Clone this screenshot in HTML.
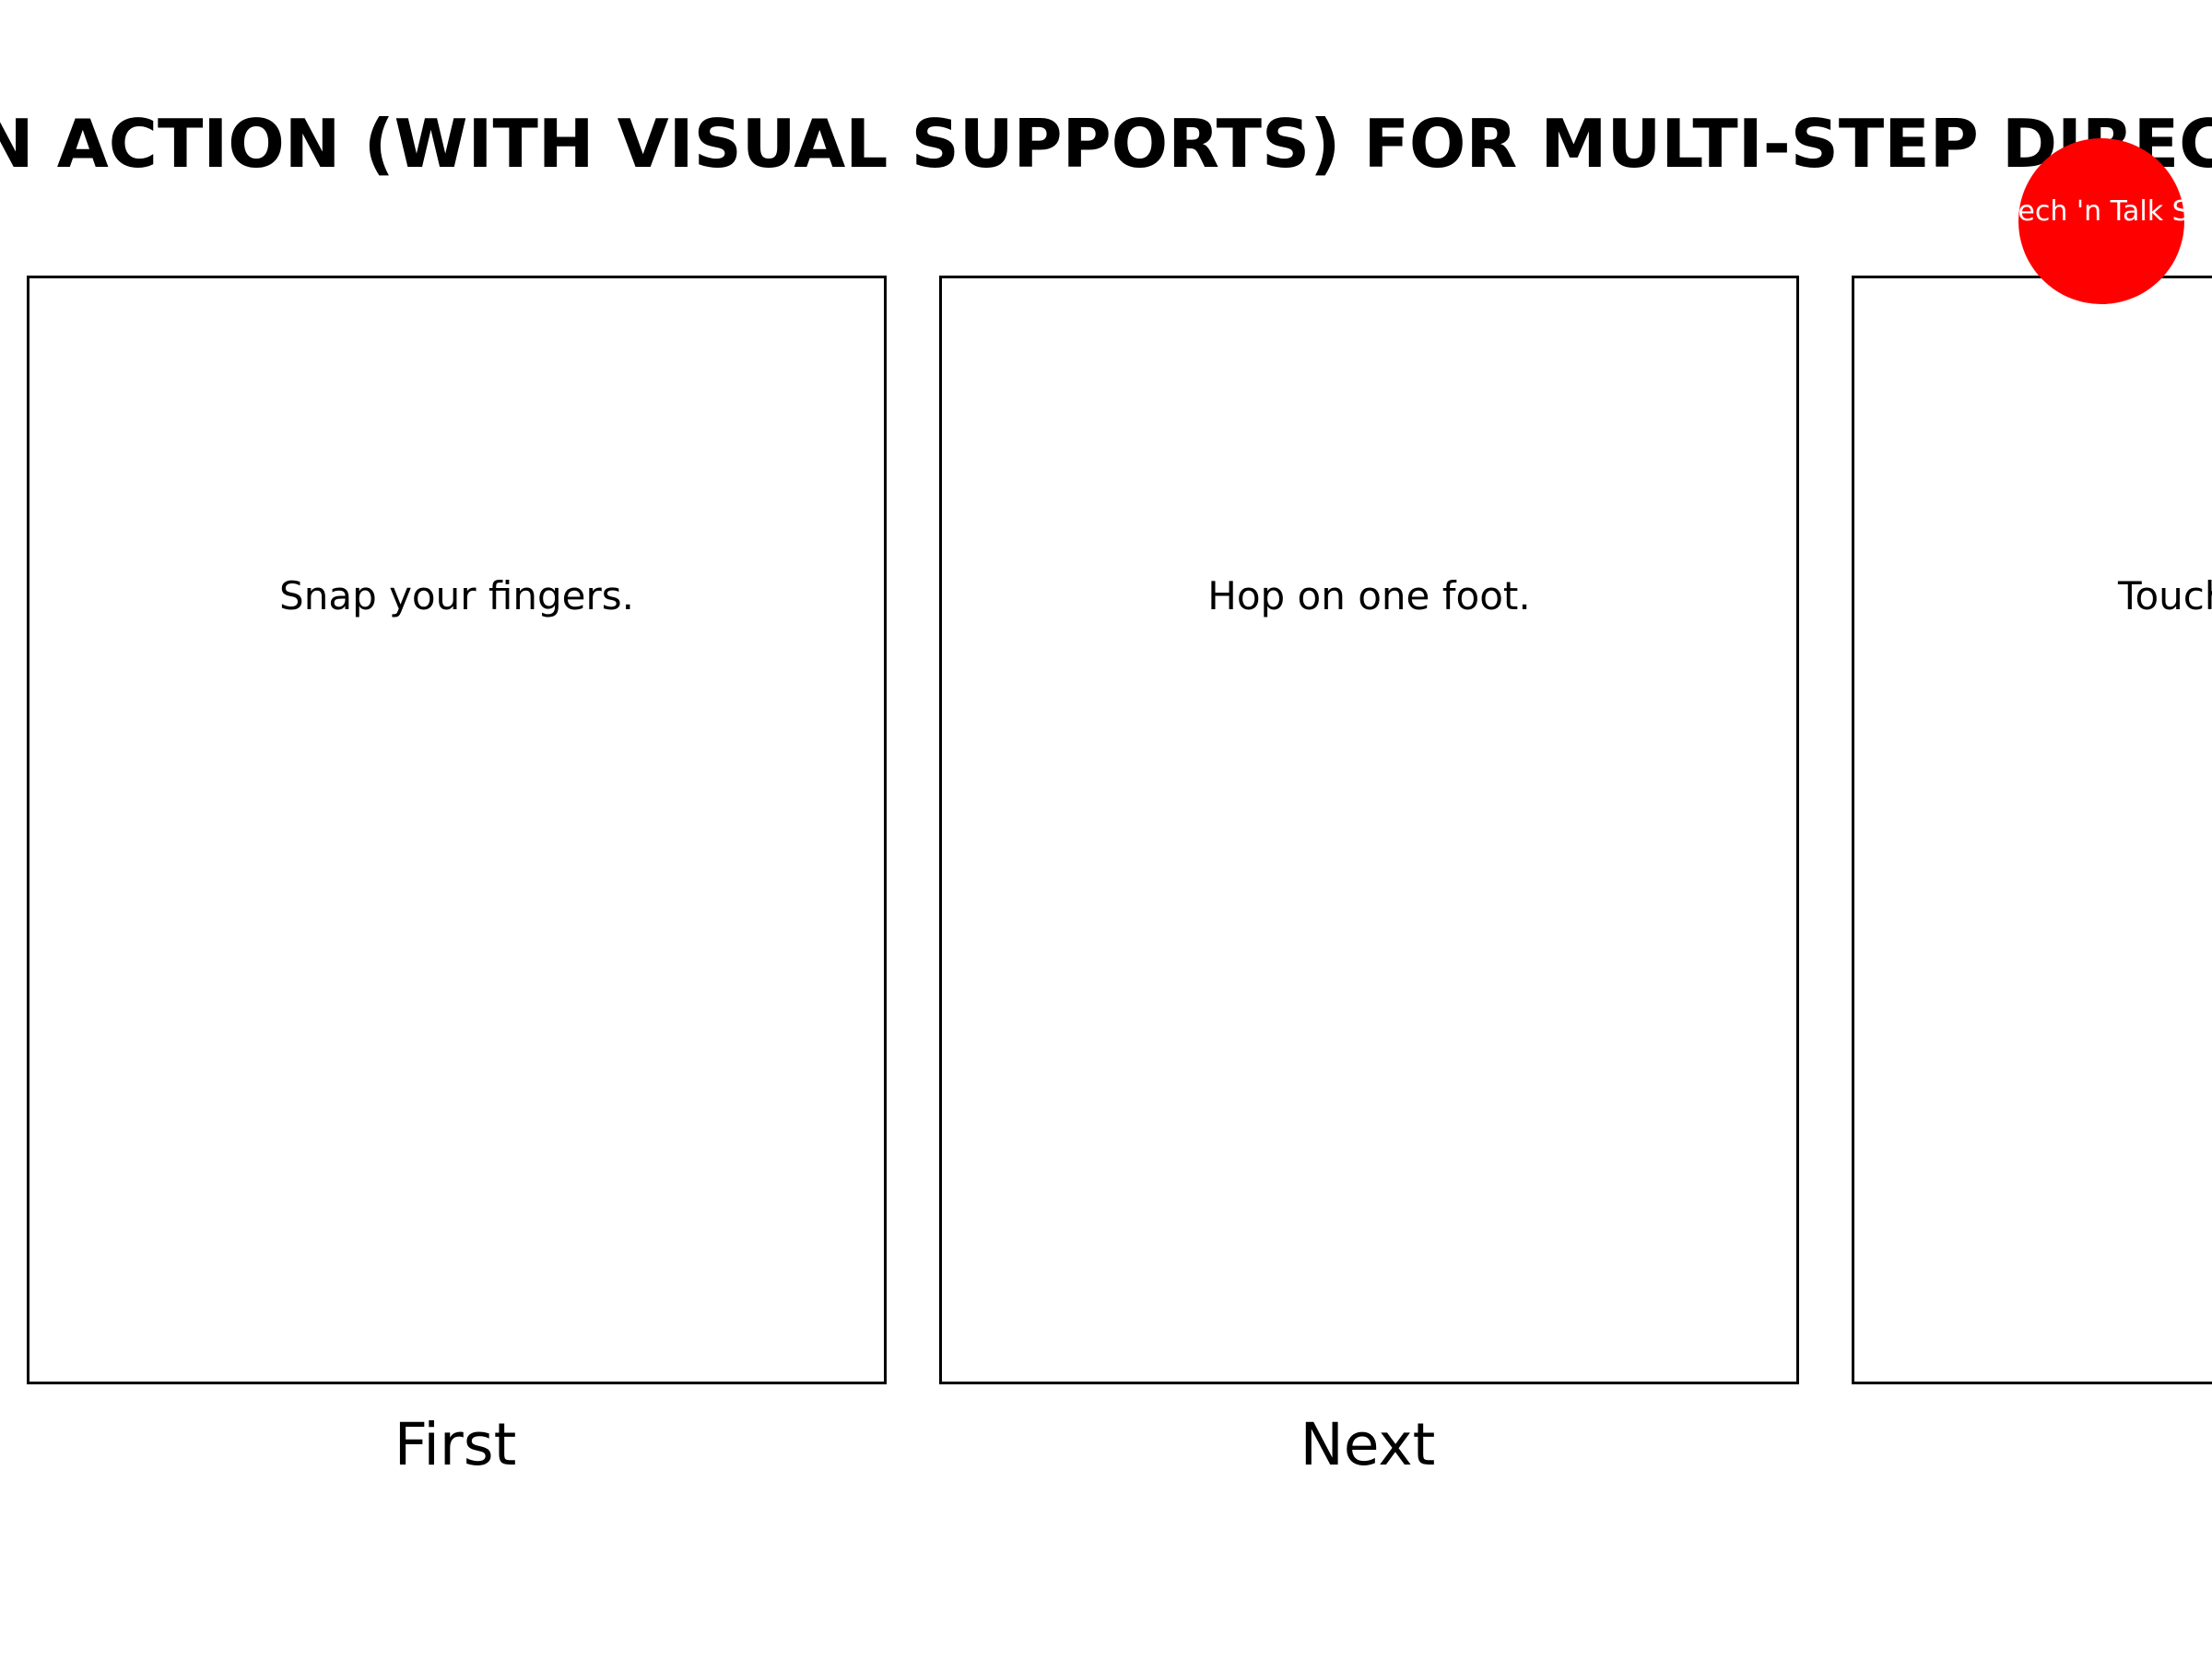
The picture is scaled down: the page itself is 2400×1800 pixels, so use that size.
<!DOCTYPE html>
<html><head><meta charset="utf-8"><style>
html,body{margin:0;padding:0;width:2400px;height:1800px;overflow:hidden;background:#fff;font-family:"DejaVu Sans","Liberation Sans",sans-serif;color:#000;position:relative}
.title{position:absolute;left:-24px;top:109px;font-size:72.4px;font-weight:bold;white-space:nowrap;line-height:96px;letter-spacing:0}
.box{position:absolute;top:299px;width:927px;height:1197px;border:3px solid #000;box-sizing:content-box}
.box .t{position:absolute;left:0;right:0;top:318px;text-align:center;font-size:42px;line-height:54px;white-space:nowrap}
.lab{position:absolute;top:1528px;width:932px;text-align:center;font-size:63px;line-height:80px}
.circle{position:absolute;left:2190px;top:150px;width:180px;height:180px;border-radius:50%;background:#ff0000;overflow:hidden}
.circle span{position:absolute;left:-60px;right:-60px;top:60px;text-align:center;color:#fff;font-size:30px;line-height:40px;white-space:nowrap}
</style></head><body>
<div class="title">N ACTION (WITH VISUAL SUPPORTS) FOR MULTI-STEP DIRECTIONS</div>
<div class="box" style="left:29px"><div class="t">Snap your fingers.</div></div>
<div class="box" style="left:1019px"><div class="t">Hop on one foot.</div></div>
<div class="box" style="left:2009px"><div class="t">Touch your nose.</div></div>
<div class="lab" style="left:28px">First</div>
<div class="lab" style="left:1018px">Next</div>
<div class="circle"><span>Speech 'n Talk Stuff</span></div>
</body></html>
